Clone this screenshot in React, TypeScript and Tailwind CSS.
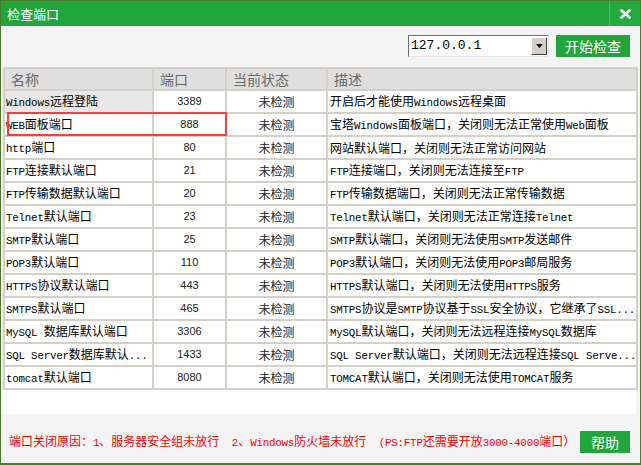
import React from 'react'

interface PortRow {
  name: string;
  port: string;
  desc: string;
}

const rows: PortRow[] = [
  { name: 'Windows远程登陆', port: '3389', desc: '开启后才能使用Windows远程桌面' },
  { name: 'WEB面板端口', port: '888', desc: '宝塔Windows面板端口，关闭则无法正常使用Web面板' },
  { name: 'http端口', port: '80', desc: '网站默认端口，关闭则无法正常访问网站' },
  { name: 'FTP连接默认端口', port: '21', desc: 'FTP连接端口，关闭则无法连接至FTP' },
  { name: 'FTP传输数据默认端口', port: '20', desc: 'FTP传输数据端口，关闭则无法正常传输数据' },
  { name: 'Telnet默认端口', port: '23', desc: 'Telnet默认端口，关闭则无法正常连接Telnet' },
  { name: 'SMTP默认端口', port: '25', desc: 'SMTP默认端口，关闭则无法使用SMTP发送邮件' },
  { name: 'POP3默认端口', port: '110', desc: 'POP3默认端口，关闭则无法使用POP3邮局服务' },
  { name: 'HTTPS协议默认端口', port: '443', desc: 'HTTPS默认端口，关闭则无法使用HTTPS服务' },
  { name: 'SMTPS默认端口', port: '465', desc: 'SMTPS协议是SMTP协议基于SSL安全协议，它继承了SSL...' },
  { name: 'MySQL 数据库默认端口', port: '3306', desc: 'MySQL默认端口，关闭则无法远程连接MySQL数据库' },
  { name: 'SQL Server数据库默认...', port: '1433', desc: 'SQL Server默认端口，关闭则无法远程连接SQL Serve...' },
  { name: 'tomcat默认端口', port: '8080', desc: 'TOMCAT默认端口，关闭则无法使用TOMCAT服务' },
]

const sans = "font-['Noto_Sans_CJK_SC','Liberation_Sans',sans-serif]"

// latin runs get a narrow mono face, CJK stays at 12px (SimSun look)
const Mixed = ({ text }: { text: string }) => {
  const parts = text.match(/[\x20-\x7e]+|[^\x20-\x7e]+/g) || []
  return (
    <>
      {parts.map((p, i) =>
        /^[\x20-\x7e]+$/.test(p) ? (
          <span key={i} className="font-['Liberation_Mono',monospace] text-[10.8px] tracking-[-0.2px] whitespace-pre">
            {p}
          </span>
        ) : (
          <span key={i}>{p}</span>
        )
      )}
    </>
  )
}

export default function App() {
  return (
    <div className="w-[641px] h-[465px] bg-[#f4f4f4] border border-[#4b7a2c] border-b-2 flex flex-col overflow-hidden">
      {/* Title bar */}
      <div className="h-[25px] bg-[#21a63c] flex items-center justify-between shrink-0">
        <span className={`${sans} text-[13px] text-white pl-[6px] leading-none`}>检查端口</span>
        <button className="w-[31px] h-[25px] bg-[#23aa3f] border-l border-[#4cbb61] flex items-center justify-center">
          <svg width="11" height="10" viewBox="0 0 11 10">
            <path d="M1.5 1.5 L9.5 8.5 M9.5 1.5 L1.5 8.5" stroke="white" strokeWidth="2.6" strokeLinecap="square" />
          </svg>
        </button>
      </div>

      {/* Toolbar */}
      <div className="flex justify-end items-center gap-[7px] pr-[10px] pt-[9px] pb-[10px]">
        <div className="w-[141px] h-[22px] flex bg-white border border-t-[#707070] border-l-[#707070] border-r-[#e4e4e4] border-b-[#e4e4e4]">
          <div className="font-['Liberation_Mono',monospace] flex-1 text-[13px] leading-[20px] pl-[2px] text-black">127.0.0.1</div>
          <div className="w-[16px] h-[18px] mt-[1px] mr-[1px] bg-[#d4d0c8] border border-t-white border-l-white border-r-[#404040] border-b-[#404040] flex items-center justify-center">
            <svg width="7" height="4" viewBox="0 0 7 4"><path d="M0 0 H7 L3.5 4 Z" fill="black" /></svg>
          </div>
        </div>
        <button className={`${sans} w-[74px] h-[22px] bg-[#21a63c] text-white text-[14px] leading-none`}>开始检查</button>
      </div>

      {/* Table */}
      <div className="relative mx-[2px] w-[633px] h-[347px] bg-white shrink-0">
        <table className="border-collapse table-fixed w-[633px]">
          <colgroup>
            <col className="w-[149px]" />
            <col className="w-[73px]" />
            <col className="w-[101px]" />
            <col className="w-[310px]" />
          </colgroup>
          <thead>
            <tr className="h-[22px] bg-[#dfdfdf]">
              {['名称', '端口', '当前状态', '描述'].map((h) => (
                <th
                  key={h}
                  className={`${sans} border-2 border-[#d4d0c8] text-left font-normal text-[14px] text-[#6a6a6a] px-[6px] leading-none`}
                >
                  {h}
                </th>
              ))}
            </tr>
          </thead>
          <tbody>
            {rows.map((r, i) => (
              <tr key={r.name} className="h-[23px]">
                <td
                  className={`${sans} border-2 border-[#d4d0c8] text-[12px] text-black pl-[1px] whitespace-nowrap overflow-hidden leading-none ${
                    i === 0 ? 'bg-[#e8e8e8]' : ''
                  }`}
                >
                  <Mixed text={r.name} />
                </td>
                <td className="border-2 border-[#d4d0c8] text-center text-[11px] text-[#222] font-['Liberation_Sans',sans-serif] leading-none">
                  {r.port}
                </td>
                <td className={`${sans} border-2 border-[#d4d0c8] text-center text-[12px] text-[#222] leading-none`}>
                  未检测
                </td>
                <td className={`${sans} border-2 border-[#d4d0c8] text-[12px] text-black pl-[2px] whitespace-nowrap overflow-hidden leading-none`}>
                  <Mixed text={r.desc} />
                </td>
              </tr>
            ))}
          </tbody>
        </table>
        {/* highlight box over the WEB panel row */}
        <div className="absolute left-[4px] top-[45px] w-[220px] h-[24px] border-2 border-[#ff3b3b] pointer-events-none" />
      </div>

      {/* Footer */}
      <div className="flex items-center justify-between pl-[8px] pr-[10px] pt-[17px]">
        <span className={`${sans} text-[12px] text-[#ff0000] whitespace-nowrap leading-none`}>
          <Mixed text="端口关闭原因：1、服务器安全组未放行  2、Windows防火墙未放行  (PS:FTP还需要开放3000-4000端口）" />
        </span>
        <button className={`${sans} w-[50px] h-[22px] bg-[#21a63c] text-white text-[14px] leading-none`}>帮助</button>
      </div>
    </div>
  )
}
